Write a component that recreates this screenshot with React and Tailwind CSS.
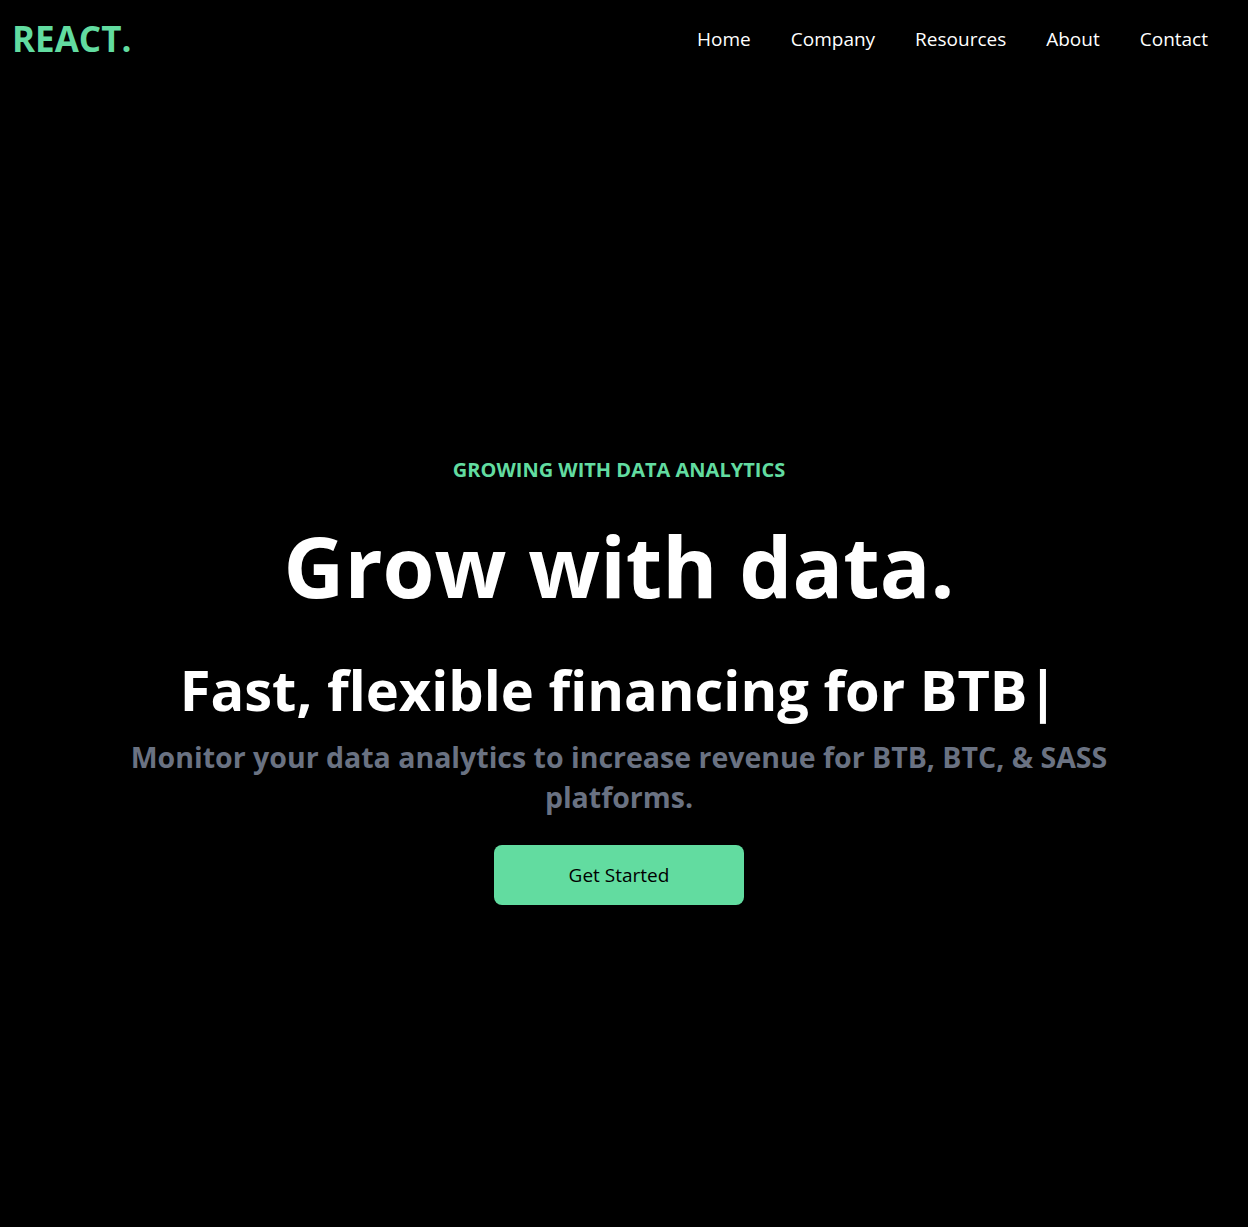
import React from "react";

const links = ["Home", "Company", "Resources", "About", "Contact"];

function Navbar() {
  return (
    <div className="flex justify-between items-center h-[79px] pl-3 pr-10 text-white">
      <h1 className="text-[35px] font-bold text-[#62dca0]">REACT.</h1>
      <ul className="flex gap-10 text-[19px]">
        {links.map((l) => (
          <li key={l}>{l}</li>
        ))}
      </ul>
    </div>
  );
}

function Hero() {
  return (
    <div className="flex flex-col items-center text-center text-white pt-[378px] pb-[322px] pr-[10px]">
      <p className="text-[#62dca0] font-bold text-[20px] leading-[26px]">GROWING WITH DATA ANALYTICS</p>
      <h1 className="text-[84px] font-bold leading-[101px] mt-8">Grow with data.</h1>
      <div className="flex justify-center items-center mt-10">
        <p className="text-[56px] font-bold leading-[67px]">Fast, flexible financing for BTB|</p>
      </div>
      <p className="max-w-[1000px] text-[28.5px] leading-[40px] font-bold text-gray-500 mt-[14px]">
        Monitor your data analytics to increase revenue for BTB, BTC, &amp; SASS platforms.
      </p>
      <button className="bg-[#62dca0] w-[250px] h-[60px] rounded-[8px] font-medium text-[19px] text-black mt-7">
        Get Started
      </button>
    </div>
  );
}

export default function App() {
  return (
    <div className="bg-black min-h-screen" style={{ fontFamily: "'Open Sans', sans-serif" }}>
      <Navbar />
      <Hero />
    </div>
  );
}
